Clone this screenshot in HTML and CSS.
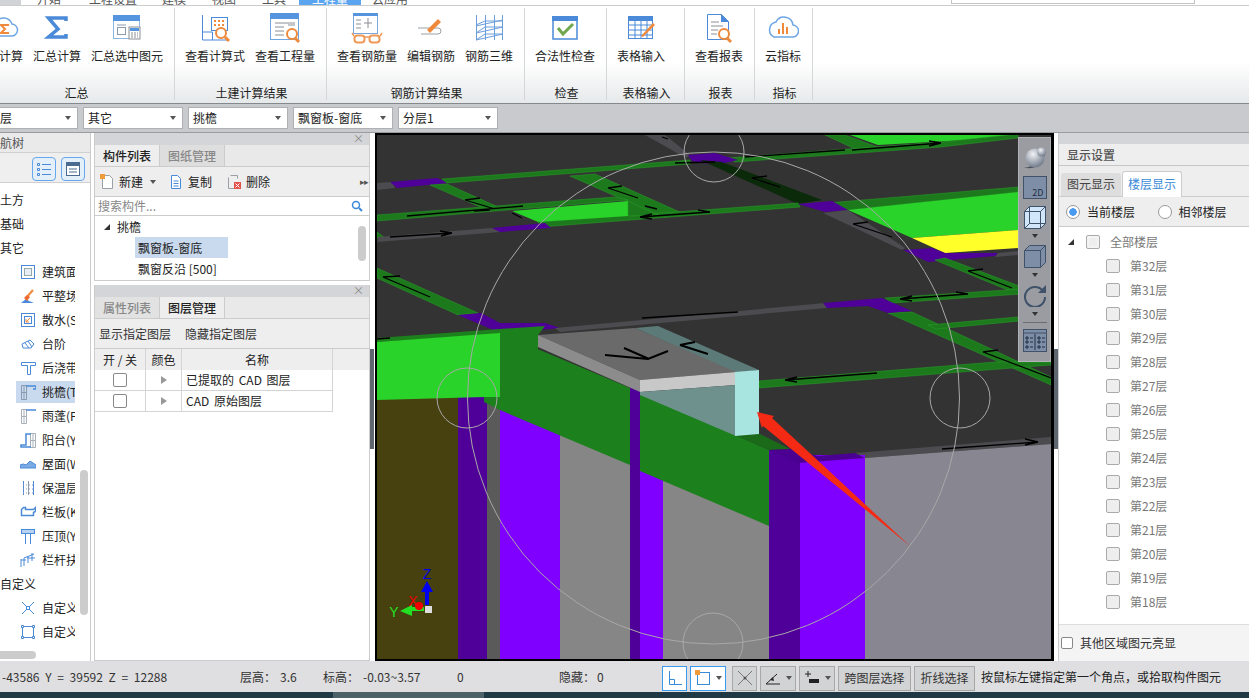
FILE: index.html
```html
<!DOCTYPE html>
<html lang="zh-CN">
<head>
<meta charset="utf-8">
<title>工程量</title>
<link rel="stylesheet" href="styles.css">
</head>
<body>
<div class="app">
  <div class="tabs">
    <span class="tabs-corner"></span>
    <span class="tab t1">开始</span><span class="tab t2">工程设置</span><span class="tab t3">建模</span><span class="tab t3">视图</span><span class="tab t3">工具</span><span class="tab active">工程量</span><span class="tab t4">云应用</span>
    <span class="tabs-search"></span>
  </div>

  <div class="ribbon">
    <section class="rg rg1">
      <div class="rb-row">
        <div class="rb"><svg class="ri" viewBox="0 0 32 32"><path d="M8 24h14a6 6 0 0 0 1-12 9 9 0 0 0-16-2 7 7 0 0 0 1 14z" fill="#fff" stroke="#6ea6e4" stroke-width="1.5"/><path d="M20 13h-8l4 4-4 4h8" fill="none" stroke="#ef8a3c" stroke-width="2"/></svg><span>云计算</span></div>
        <div class="rb"><svg class="ri" viewBox="0 0 32 32"><path d="M25 9V6H7.500L17 17 7.500 25H25v-3" fill="none" stroke="#4a8ad8" stroke-width="3.500"/></svg><span>汇总计算</span></div>
        <div class="rb"><svg class="ri" viewBox="0 0 32 32"><rect x="2.500" y="3.500" width="26" height="23" fill="#fff" stroke="#8fb5e4"/><rect x="2" y="3" width="27" height="6" fill="#5595e0"/><rect x="6.500" y="15.500" width="8" height="7" fill="none" stroke="#8a9bb0"/><path d="M6 13h9" stroke="#8a9bb0"/><rect x="18" y="15" width="11" height="12" fill="#fff" stroke="#8a8f96"/><rect x="19" y="16" width="9" height="3" fill="#5595e0"/><path d="M20 21h7M20 23h7M20 25h7" stroke="#8a8f96" stroke-dasharray="2 1"/></svg><span>汇总选中图元</span></div>
      </div>
      <div class="rg-label">汇总</div>
    </section>
    <section class="rg rg2">
      <div class="rb-row">
        <div class="rb"><svg class="ri" viewBox="0 0 32 32"><path d="M3.500 3v25H30M3.500 20h10v8" fill="none" stroke="#4a8ad8"/><rect x="12.500" y="5.500" width="16" height="13" fill="#fff" stroke="#4a8ad8"/><path d="M15 9h11M15 13h11" stroke="#ef8a3c" stroke-width="2" stroke-dasharray="2 2"/><circle cx="22" cy="21" r="5" fill="#fff" stroke="#ef8a3c" stroke-width="2"/><path d="M26 25l4 4" stroke="#ef8a3c" stroke-width="3"/></svg><span>查看计算式</span></div>
        <div class="rb"><svg class="ri" viewBox="0 0 32 32"><rect x="1.500" y="1.500" width="28" height="26" fill="#fff" stroke="#6ea6e4"/><rect x="1" y="1" width="29" height="6" fill="#5595e0"/><path d="M6 11h20M6 15h9M6 19h9M6 23h9M19 13h7" stroke="#8a8f96"/><circle cx="23" cy="22" r="5" fill="#fff" stroke="#ef8a3c" stroke-width="2"/><path d="M26 26l4 4" stroke="#ef8a3c" stroke-width="3"/></svg><span>查看工程量</span></div>
      </div>
      <div class="rg-label">土建计算结果</div>
    </section>
    <section class="rg rg3">
      <div class="rb-row">
        <div class="rb"><svg class="ri" viewBox="0 0 32 32"><rect x="2.500" y="1.500" width="24" height="20" fill="#fff" stroke="#7aa8de"/><rect x="2" y="1" width="25" height="3" fill="#5595e0"/><path d="M5 8h5M5 12h5M5 16h5M17 6v10M13 11h8" stroke="#8a8f96"/><rect x="3.500" y="23.500" width="10" height="7" rx="3" fill="#fff" stroke="#f09a5a" stroke-width="2"/><rect x="18.500" y="23.500" width="10" height="7" rx="3" fill="#fff" stroke="#f09a5a" stroke-width="2"/><path d="M13 25h6M3 24l-2-3M29 24l2-3" stroke="#f09a5a" stroke-width="1.500"/></svg><span>查看钢筋量</span></div>
        <div class="rb"><svg class="ri" viewBox="0 0 32 32"><path d="M3 16h20a3 3 0 0 1 0 6H6" fill="none" stroke="#9aa0a6"/><path d="M12 18l11-11 3 3-11 11z" fill="#ef8a3c"/></svg><span>编辑钢筋</span></div>
        <div class="rb"><svg class="ri" viewBox="0 0 32 32"><path d="M3.500 3v25M12.500 3v25M21.500 3v25M29.500 3v25M3 14l27-6M3 21l27-6M3 28l27-6M3 13l9-4M12 9h18M3 21l9-6h18M3 28l9-6h18" fill="none" stroke="#6a9ddc"/></svg><span>钢筋三维</span></div>
      </div>
      <div class="rg-label">钢筋计算结果</div>
    </section>
    <section class="rg rg4">
      <div class="rb-row">
        <div class="rb"><svg class="ri" viewBox="0 0 32 32"><rect x="4" y="5" width="24" height="22" fill="#fff" stroke="#4a8ad8" stroke-width="1.500"/><rect x="3" y="4" width="26" height="5" fill="#4a8ad8"/><path d="M9 16l5 6 10-10" fill="none" stroke="#6fa84f" stroke-width="3"/></svg><span>合法性检查</span></div>
      </div>
      <div class="rg-label">检查</div>
    </section>
    <section class="rg rg5">
      <div class="rb-row">
        <div class="rb"><svg class="ri" viewBox="0 0 32 32"><rect x="3.500" y="4.500" width="24" height="22" fill="#fff" stroke="#4a8ad8"/><rect x="3" y="4" width="25" height="5" fill="#4a8ad8"/><path d="M4 13h23M4 18h23M4 23h23M10 9v17M16 9v17M22 9v17" stroke="#4a8ad8"/><path d="M16 24l12-13 2 2-12 12z" fill="#ef8a3c"/></svg><span>表格输入</span></div>
      </div>
      <div class="rg-label">表格输入</div>
    </section>
    <section class="rg rg6">
      <div class="rb-row">
        <div class="rb"><svg class="ri" viewBox="0 0 32 32"><path d="M4.500 2.500h14l7 7v18h-21z" fill="#fff" stroke="#4a8ad8"/><path d="M18 2l8 8h-8z" fill="#4a8ad8"/><path d="M8 10h8M8 14h12M8 18h7M8 22h6" stroke="#8a8f96"/><circle cx="21" cy="22" r="5" fill="#fff" stroke="#ef8a3c" stroke-width="2"/><path d="M24 26l4 4" stroke="#ef8a3c" stroke-width="3"/></svg><span>查看报表</span></div>
      </div>
      <div class="rg-label">报表</div>
    </section>
    <section class="rg rg7">
      <div class="rb-row">
        <div class="rb"><svg class="ri" viewBox="0 0 32 32"><path d="M7 25h18a6 6 0 0 0 1-12 9 9 0 0 0-17-3 8 8 0 0 0-2 15z" fill="#fff" stroke="#6ea6e4" stroke-width="1.500"/><path d="M12 22v-5M16 22V11M20 22v-7" stroke="#ef8a3c" stroke-width="2"/></svg><span>云指标</span></div>
      </div>
      <div class="rg-label">指标</div>
    </section>
  </div>

  <div class="combos">
    <div class="combo first"><span>首层</span><i class="caret"></i></div>
    <div class="combo"><span>其它</span><i class="caret"></i></div>
    <div class="combo"><span>挑檐</span><i class="caret"></i></div>
    <div class="combo"><span>飘窗板-窗底</span><i class="caret"></i></div>
    <div class="combo"><span>分层1</span><i class="caret"></i></div>
  </div>

  <div class="main">
    <aside class="nav">
      <div class="nav-head"><span>导航树</span></div>
      <div class="nav-tools">
        <span class="nav-btn"><svg viewBox="0 0 16 16" class="nb"><path d="M1.500 2.500h2v2h-2zM1.500 7.500h2v2h-2zM1.500 12.500h2v2h-2zM6 3.500h9M6 8.500h9M6 13.500h9" fill="none" stroke="#4a8ad8"/></svg></span>
        <span class="nav-btn"><svg viewBox="0 0 16 16" class="nb"><rect x="1.500" y="1.500" width="13" height="13" fill="#fff" stroke="#4a6a90"/><rect x="1" y="1" width="14" height="4" fill="#4a6a90"/><path d="M4 8h8M4 11h8" stroke="#4a6a90"/></svg></span>
      </div>
      <div class="nav-body">
        <div class="nav-list">
          <div class="n1">土方</div>
          <div class="n1">基础</div>
          <div class="n1">其它</div>
          <div class="n2"><svg class="ti" viewBox="0 0 16 16"><rect x="1.500" y="1.500" width="13" height="13" fill="none" stroke="#4a8ad8"/><rect x="4.500" y="4.500" width="7" height="7" fill="#e8eef5" stroke="#9aa"/></svg><span>建筑面积(M)</span></div>
          <div class="n2"><svg class="ti" viewBox="0 0 16 16"><path d="M1 15l5-4 3 2 5 2z" fill="#4a8ad8"/><path d="M6 10l7-8" stroke="#ef8a3c" stroke-width="2"/><path d="M4 10l3 3 3-4-3-2z" fill="#ef6a2c"/></svg><span>平整场地(V)</span></div>
          <div class="n2"><svg class="ti" viewBox="0 0 16 16"><rect x="1.500" y="1.500" width="13" height="13" fill="none" stroke="#4a8ad8"/><rect x="4.500" y="4.500" width="7" height="7" fill="#fff" stroke="#4a8ad8"/><path d="M6 10l4-4M6 10h3M6 10V7" stroke="#ef8a3c"/></svg><span>散水(S)</span></div>
          <div class="n2"><svg class="ti" viewBox="0 0 16 16"><path d="M2 8l8-4 4 4-3 4H3z" fill="#fff" stroke="#4a8ad8"/><path d="M5 7l4 5M8 5l4 6" stroke="#4a8ad8"/></svg><span>台阶</span></div>
          <div class="n2"><svg class="ti" viewBox="0 0 16 16"><path d="M1.500 2.500h14v3h-5v9h-3v-9h-6z" fill="none" stroke="#4a8ad8"/></svg><span>后浇带(JD)</span></div>
          <div class="n2 sel"><svg class="ti" viewBox="0 0 16 16"><path d="M1.500 1.500h5v14h-5zM1.500 8.500h5M4 1.500v14" fill="none" stroke="#8a9bb0"/><path d="M6 2h10v3h-3" fill="none" stroke="#4a8ad8" stroke-width="1.500"/></svg><span>挑檐(T)</span></div>
          <div class="n2"><svg class="ti" viewBox="0 0 16 16"><path d="M1.500 1.500h5v14h-5zM1.500 8.500h5M4 1.500v14" fill="none" stroke="#a8b0b8"/><path d="M6 2h10" fill="none" stroke="#4a8ad8" stroke-width="1.500"/></svg><span>雨蓬(P)</span></div>
          <div class="n2"><svg class="ti" viewBox="0 0 16 16"><path d="M10.500 1.500h5v14h-5zM10.500 8.500h5M13 1.500v14" fill="none" stroke="#a8b0b8"/><path d="M11 2H6v11H1v2h10" fill="none" stroke="#4a8ad8" stroke-width="1.500"/></svg><span>阳台(Y)</span></div>
          <div class="n2"><svg class="ti" viewBox="0 0 16 16"><path d="M0 9l3-1 3 1 4-4 6 4v3H0z" fill="#7aaae4" stroke="#4a8ad8"/></svg><span>屋面(W)</span></div>
          <div class="n2"><svg class="ti" viewBox="0 0 16 16"><path d="M3.500 1v14M13.500 1v14" stroke="#4a8ad8"/><path d="M8.500 1v14" stroke="#8a9bb0"/><path d="M3 5h11M3 9h11M3 13h11" stroke="#8a9bb0" stroke-dasharray="1 2"/></svg><span>保温层(H)</span></div>
          <div class="n2"><svg class="ti" viewBox="0 0 16 16"><path d="M1.500 5.500l2-2h2v2h8l2-2v4l-2 1v3h-12z" fill="#fff" stroke="#4a8ad8" stroke-width="1.500"/></svg><span>栏板(K)</span></div>
          <div class="n2"><svg class="ti" viewBox="0 0 16 16"><rect x="1.500" y="1.500" width="13" height="4" fill="#b8d3f2" stroke="#4a8ad8"/><path d="M5.500 5v11M10.500 5v11" stroke="#4a8ad8"/></svg><span>压顶(YD)</span></div>
          <div class="n2"><svg class="ti" viewBox="0 0 16 16"><path d="M1 15V7M4 14V6l10-4M8 11V4M12 9V1M1 8h5M7 6h8" fill="none" stroke="#4a8ad8"/></svg><span>栏杆扶手(G)</span></div>
          <div class="n1">自定义</div>
          <div class="n2"><svg class="ti" viewBox="0 0 16 16"><path d="M2 2l4 4M14 2l-4 4M2 14l4-4M14 14l-4-4" stroke="#4a8ad8"/><rect x="6.500" y="6.500" width="3" height="3" fill="none" stroke="#4a8ad8"/></svg><span>自定义点</span></div>
          <div class="n2"><svg class="ti" viewBox="0 0 16 16"><rect x="2.500" y="2.500" width="11" height="11" fill="none" stroke="#4a8ad8"/><path d="M1.500 1.500h2v2h-2zM12.500 1.500h2v2h-2zM1.500 12.500h2v2h-2zM12.500 12.500h2v2h-2z" fill="#fff" stroke="#4a8ad8"/></svg><span>自定义线</span></div>
        </div>
        <div class="nav-vbar"><i></i></div>
      </div>
      <div class="nav-hbar"><i></i></div>
    </aside>

    <div class="mid">
      <section class="pane pane-top">
        <div class="pane-title"><span class="x">×</span></div>
        <div class="ptabs">
          <span class="ptab on">构件列表</span><span class="ptab">图纸管理</span>
        </div>
        <div class="ptools">
          <span class="pt pt-new"><svg class="pi" viewBox="0 0 14 16"><path d="M2.500 1.500h7l3 3v10h-10z" fill="#fff" stroke="#9aa0a6"/><rect x="0" y="0" width="5" height="5" fill="#f09a3c"/></svg>新建</span>
          <i class="caret dark"></i>
          <span class="pt pt-copy"><svg class="pi" viewBox="0 0 14 16"><path d="M2.500 1.500h6l3 3v10h-9z" fill="#fff" stroke="#4a8ad8"/><path d="M4.500 7h5M4.500 9.500h5M4.500 12h5" stroke="#4a8ad8"/></svg>复制</span>
          <span class="pt pt-del"><svg class="pi" viewBox="0 0 14 16"><path d="M3.500 1.500h7v3M1.500 3.500v11h6" fill="none" stroke="#9aa0a6"/><rect x="7" y="8" width="7" height="7" fill="#e2504a"/><path d="M8.500 9.500l4 4M12.500 9.500l-4 4" stroke="#fff"/></svg>删除</span>
          <span class="more">▸▸</span>
        </div>
        <div class="search"><span>搜索构件...</span><svg class="sg" viewBox="0 0 12 12"><circle cx="5" cy="5" r="3.500" fill="none" stroke="#3a8ad8" stroke-width="1.500"/><path d="M8 8l3 3" stroke="#3a8ad8" stroke-width="2"/></svg></div>
        <div class="plist">
          <div class="plist-in">
            <div class="pl-parent"><i class="tri"></i>挑檐</div>
            <div class="pl-child sel">飘窗板-窗底</div>
            <div class="pl-child">飘窗反沿 [500]</div>
          </div>
          <div class="pl-bar"></div>
        </div>
      </section>
      <section class="pane pane-bot">
        <div class="pane-title"><span class="x">×</span></div>
        <div class="ptabs">
          <span class="ptab off">属性列表</span><span class="ptab cur">图层管理</span>
        </div>
        <div class="ptools2"><span>显示指定图层</span><span>隐藏指定图层</span></div>
        <div class="tbl">
          <div class="tr th"><span class="c1">开 / 关</span><span class="c2">颜色</span><span class="c3">名称</span></div>
          <div class="tr"><span class="c1"><i class="cb"></i></span><span class="c2"><i class="play"></i></span><span class="c3 left">已提取的 CAD 图层</span></div>
          <div class="tr"><span class="c1"><i class="cb"></i></span><span class="c2"><i class="play"></i></span><span class="c3 left">CAD 原始图层</span></div>
        </div>
      </section>
    </div>

    <div class="split"><i></i></div>

    <div class="view">
      <svg class="scene" viewBox="377 135 674 524">
        <rect x="377" y="135" width="674" height="524" fill="#333"/>
        <!-- upper beams -->
        <polygon class="dg" points="825,135 845,135 880,148 855,149"/>
        <polygon class="lg" points="850,135 878,145 1018,137 1018,135"/>
        <polygon class="gy" points="377,183 392,182 395,188 377,190"/>
        <polygon class="pu" points="390,182 437,178 448,183 397,188"/>
        <polygon class="dg" points="442,179 690,160 690,164 447,183"/>
        <polygon class="gy" points="645,135 665,135 690,155 686,158"/>
        <polygon class="dg" points="728,158 941,142 1018,134 1018,138 941,147 735,162"/>
        <polygon class="pu" points="688,155 715,153 738,160 715,165 692,161"/>
        <polygon fill="#0a2a0a" points="700,160 722,162 822,200 798,204"/>
        <polygon class="dg" points="430,185 447,184 498,207 485,209"/>
        <polygon class="dg" points="570,176 595,174 682,213 658,215"/>
        <polygon class="dg" points="377,215 615,197 628,200 377,221"/>
        <polygon class="dg" points="538,222 798,203 800,207 541,227"/>
        <polygon class="lg" points="512,211 628,201 628,216 538,222"/>
        <polygon class="dg" points="628,201 658,215 628,216"/>
        <polygon class="dg" points="377,232 385,238 377,238"/>
        <polygon class="gy" points="378,237 492,228 500,232 377,242"/>
        <polygon class="pu" points="492,228 545,223 551,228 500,232"/>
        <polygon class="dg" points="827,203 1018,187 1018,192 848,210"/>
        <polygon class="lg" points="848,210 1018,192 1018,230 912,238"/>
        <polygon fill="#ffff2a" points="912,238 1018,230 1018,248 945,253"/>
        <polygon class="pu" points="798,204 832,201 848,210 825,212"/>
        <polygon class="gy" points="823,213 848,210 905,248 902,250"/>
        <polygon class="gy" points="998,253 1051,248 1051,252 995,257"/>
        <polygon class="pu" points="903,250 932,248 945,253 998,253 995,256 928,262"/>
        <polygon class="dg" points="935,260 945,258 1051,298 1051,308"/>
        <polygon class="dg" points="885,298 1051,287 1051,292 892,303"/>
        <polygon class="dg" points="888,313 912,312 1051,377 1051,385"/>
        <polygon class="dg" points="928,325 1051,314 1051,318 936,329"/>
        <polygon class="dg" points="377,268 478,313 458,315 377,278"/>
        <polygon class="pu" points="458,315 481,313 500,323 545,323 560,328 507,333 498,332"/>
        <polygon class="gy" points="555,328 825,303 827,308 560,332"/>
        <polygon class="pu" points="823,303 882,298 912,311 888,313 868,306 827,308"/>
        <polygon class="dg" points="759,381 995,362 1051,362 1051,365 759,388"/>
        <!-- back strip -->
        <polygon class="gy" points="855,453 1051,437 1051,444 865,458"/>
        <!-- walls -->
        <rect x="377" y="398" width="81" height="261" fill="#474110"/>
        <rect x="458" y="397" width="29" height="262" fill="#4f0099"/>
        <rect x="487" y="397" width="13" height="262" fill="#5a5a5a"/>
        <polygon fill="#8000ff" points="500,405 560,430 560,659 500,659"/>
        <polygon fill="#868686" points="560,430 630,460 630,659 560,659"/>
        <polygon fill="#8000ff" points="640,465 663,475 663,659 640,659"/>
        <polygon fill="#868686" points="663,475 770,520 770,659 663,659"/>
        <rect x="630" y="388" width="10" height="271" fill="#4f0099"/>
        <rect x="800" y="455" width="65" height="204" fill="#8000ff"/>
        <polygon fill="#888690" points="865,458 1051,444 1051,659 865,659"/>
        <rect x="769" y="450" width="31" height="209" fill="#4f0099"/>
        <!-- green block and beam -->
        <polygon fill="#1c801c" points="377,338 500,329 545,326 538,335 538,350 500,334 377,342"/>
        <polygon class="lg" points="377,342 500,333 500,397 485,397 377,400"/>
        <polygon fill="#1c801c" points="500,333 630,388 630,465 500,410 484,402 484,397 500,397"/>
        <polygon fill="#1c801c" points="640,393 769,450 769,526 640,471"/>
        <polygon fill="#1a6a1a" points="735,435 760,434 790,449 769,450"/>
        <polygon fill="#4a0090" points="769,450 798,463 865,458 855,453 818,456 790,449"/>
        <!-- bay window box -->
        <polygon fill="#5c7b78" points="635,328 658,326 759,370 736,373"/>
        <polygon fill="#6a6a6a" points="538,335 635,328 736,372 640,380"/>
        <polygon fill="#8c8c8c" points="538,335 640,380 640,392 538,347"/>
        <polygon fill="#c8c8c8" points="640,380 736,372 736,385 640,392"/>
        <polygon fill="#6e918d" points="640,392 736,385 736,436 640,395"/>
        <polygon fill="#a8e4e0" points="735,372 759,370 759,434 735,436"/>
        <!-- dimension arrows -->
        <path class="ar" d="M465 200L495 209M465 200l15-2M407 216L523 206M490 210l-16 1M390 237L452 233M452 233l-12-2M452 233l-11 3M383 277L430 297M383 277l17-1M608 188L638 198M608 188l14-2M645 206L657 209M640 217L710 212M640 217l12-3M640 217l12 2M710 212l-12-2M642 318L738 312M377 339L390 338M512 213L522 218M752 178L780 187M752 178l15-2M853 224L892 237M853 224l15-2M852 150L941 143M941 143l-12-2M941 143l-12 3M745 157L845 150M968 271L1012 288M968 271l15-2M900 299L968 294M900 299l12-3M900 299l12 2M968 294l-12-2M983 352L1051 378M983 352l15-2M785 380L877 373M785 380l12-3M785 380l12 2M942 449L1038 442M1038 442l-13-3M1038 442l-13 3M675 163L715 162M662 137L668 139"/>
        <path class="ar2" d="M605 355L648 359L668 351M624 348L649 359M680 345L708 354M680 345L695 342"/>
        <!-- snap circles -->
        <g class="ring">
          <circle cx="713.500" cy="398" r="246"/>
          <circle cx="714" cy="152" r="30"/>
          <circle cx="467" cy="398" r="30"/>
          <circle cx="960" cy="398" r="30"/>
          <circle cx="713" cy="643" r="30"/>
        </g>
        <!-- red annotation arrow -->
        <polygon fill="#f42a14" points="757,412 774,416 772,418 910,546 763,426 762,428"/>
        <!-- axes -->
        <path d="M427 605V588" stroke="#0000f0" stroke-width="4"/>
        <polygon fill="#0000f0" points="427,581 433,592 421,592"/>
        <text class="ax az" x="427" y="579">Z</text>
        <path d="M424 609H408" stroke="#22e022" stroke-width="4"/>
        <polygon fill="#22e022" points="400,611 412,605 412,616"/>
        <text class="ax ay" x="394" y="617">Y</text>
        <circle cx="419" cy="606" r="4" fill="#f00000"/>
        <text class="ax axx" x="413" y="606">X</text>
        <rect x="425" y="606" width="7" height="7" fill="#ddd"/>
      </svg>
      <div class="vtools">
        <svg class="vt-sphere" viewBox="0 0 24 24"><defs><radialGradient id="sph" cx="40%" cy="30%" r="75%"><stop offset="0" stop-color="#f0f2f6"/><stop offset="1" stop-color="#6a7484"/></radialGradient></defs><path d="M0 21c5 2 15-3 22-13l-3 9c-4 4-12 7-19 4z" fill="#4a5260"/><circle cx="12" cy="12" r="9.500" fill="url(#sph)"/><circle cx="18.500" cy="6" r="4.500" fill="url(#sph)"/></svg>
        <div class="vt-2d"><span>2D</span></div>
        <svg class="vt-cube" viewBox="0 0 24 24"><path d="M1.500 6.500l5-5h16v17l-5 5h-16z" fill="#d2e6fb" stroke="#3f5269"/><path d="M1.500 6.500h16v17M17.500 6.500l5-5M6.500 1.500v17h16M6.500 18.500l-5 5" fill="none" stroke="#3f5269"/></svg>
        <i class="caret small"></i>
        <svg class="vt-cube" viewBox="0 0 24 24"><path d="M1.500 6.500l5-5h16v17l-5 5h-16z" fill="#7d8ea6" stroke="#3f5269"/><path d="M1.500 6.500h16v17M17.500 6.500l5-5" fill="none" stroke="#3f5269"/></svg>
        <i class="caret small"></i>
        <svg class="vt-cube" viewBox="0 0 24 24"><path d="M20 8a10 10 0 1 0 2 6" fill="none" stroke="#3f5269" stroke-width="2"/><path d="M23 2v8h-8z" fill="#3f5269"/></svg>
        <i class="caret small"></i>
        <div class="vt-sep"></div>
        <svg class="vt-cube" viewBox="0 0 24 24"><rect x="0.500" y="1.500" width="23" height="22" fill="#7d8ea6" stroke="#3f5269"/><path d="M1 5h22" stroke="#3f5269"/><path d="M12 6v16M3 9h2v2H3zM3 13h2v2H3zM3 18h2v2H3zM15 9h2v2h-2zM15 13h2v2h-2zM15 18h2v2h-2zM7 10h3M7 14h3M7 19h3M19 10h3M19 14h3M19 19h3" fill="none" stroke="#1f2f44"/></svg>
      </div>
    </div>

    <div class="split right"><i></i></div>

    <aside class="side">
      <div class="side-top"></div>
      <div class="side-head">显示设置</div>
      <div class="stabs"><span class="stab">图元显示</span><span class="stab on">楼层显示</span></div>
      <div class="radios">
        <span class="radio on"><i></i>当前楼层</span>
        <span class="radio"><i></i>相邻楼层</span>
      </div>
      <div class="floors">
        <div class="fl root"><i class="tri"></i><i class="fcb root-cb"></i>全部楼层</div>
        <div class="fl"><i class="fcb"></i>第32层</div>
        <div class="fl"><i class="fcb"></i>第31层</div>
        <div class="fl"><i class="fcb"></i>第30层</div>
        <div class="fl"><i class="fcb"></i>第29层</div>
        <div class="fl"><i class="fcb"></i>第28层</div>
        <div class="fl"><i class="fcb"></i>第27层</div>
        <div class="fl"><i class="fcb"></i>第26层</div>
        <div class="fl"><i class="fcb"></i>第25层</div>
        <div class="fl"><i class="fcb"></i>第24层</div>
        <div class="fl"><i class="fcb"></i>第23层</div>
        <div class="fl"><i class="fcb"></i>第22层</div>
        <div class="fl"><i class="fcb"></i>第21层</div>
        <div class="fl"><i class="fcb"></i>第20层</div>
        <div class="fl"><i class="fcb"></i>第19层</div>
        <div class="fl"><i class="fcb"></i>第18层</div>
      </div>
      <div class="side-foot"><i class="cb small"></i>其他区域图元亮显</div>
    </aside>
  </div>

  <div class="status">
    <span class="st s-coord">-43586 Y = 39592 Z = 12288</span>
    <span class="st s-lh">层高：</span><span class="st s-lhv">3.6</span>
    <span class="st s-bg">标高：</span><span class="st s-bgv">-0.03~3.57</span>
    <span class="st s-zero">0</span>
    <span class="st s-hide">隐藏：</span><span class="st s-hidev">0</span>
    <span class="sb on b1"><svg viewBox="0 0 16 16" class="si"><path d="M2.500 1v13.500H15M2.500 9.500h5v5" fill="none" stroke="#3a8ad8"/></svg></span>
    <span class="sb on b2"><svg viewBox="0 0 16 16" class="si"><rect x="2.500" y="2.500" width="12" height="12" fill="none" stroke="#3a8ad8"/><rect x="0" y="0" width="5" height="5" fill="#f09a3c"/></svg><i class="caret dark"></i></span>
    <span class="sb b3"><svg viewBox="0 0 16 16" class="si"><path d="M1 1l14 14M15 1L1 15" stroke="#777"/><circle cx="8" cy="8" r="1.500" fill="#555"/></svg></span>
    <span class="sb b4"><svg viewBox="0 0 16 16" class="si"><path d="M1 14h14M1 14L12 4" stroke="#222"/><path d="M5 10l3-3 1 4z" fill="#222"/></svg><i class="caret dark"></i></span>
    <span class="sb b5"><svg viewBox="0 0 16 16" class="si"><path d="M1 4h6M4 1v6" stroke="#222"/><rect x="5" y="9" width="10" height="4" fill="#222"/></svg><i class="caret dark"></i></span>
    <span class="sb txt b6">跨图层选择</span>
    <span class="sb txt b7">折线选择</span>
    <span class="st s-hint">按鼠标左键指定第一个角点，或拾取构件图元</span>
  </div>
  <div class="taskbar"><i></i></div>
</div>
</body>
</html>
```

FILE: styles.css
```css
* { box-sizing: border-box; }
html, body { margin: 0; padding: 0; }
body { width: 1249px; height: 698px; overflow: hidden; background: #fff; }
.app {
  width: 1249px; height: 698px; overflow: hidden; display: flex; flex-direction: column;
  font: 12px/16px "Noto Sans CJK SC", "Liberation Sans", sans-serif; color: #222;
}

/* top tabs, clipped by the window edge */
.tabs { height: 6px; flex: none; display: flex; background: #fff; border-bottom: 1px solid #ccc; overflow: hidden; line-height: 12px; }
.tabs-corner { width: 21px; background: #d2d3d6; flex: none; }
.tab { height: 5px; flex: none; display: flex; align-items: flex-end; justify-content: center; color: #555; overflow: hidden; }
.tab.t1 { width: 56px; } .tab.t2 { width: 72px; } .tab.t3 { width: 50px; } .tab.t4 { width: 58px; }
.tab.active { width: 62px; background: #5ba5f0; color: #fff; }
.tabs-search { width: 244px; height: 4px; margin-left: 532px; border: 1px solid #c4c4c4; border-top: 0; flex: none; }

/* ribbon */
.ribbon {
  height: 98px; flex: none; display: flex; border-bottom: 1px solid #85888c;
  background: linear-gradient(#fff 0, #fff 58%, #e6e9ea 100%);
}
.rg { flex: none; padding: 2px 0 0 5px; display: flex; flex-direction: column; position: relative; border-right: 1px solid transparent; }
.rg::after { content: ""; position: absolute; right: -1px; top: 2px; bottom: 3px; width: 1px; background: #d4d6d8; }
.rg1 { width: 198px; margin-left: -23px; }
.rg2 { width: 152px; } .rg3 { width: 198px; } .rg4 { width: 82px; }
.rg5 { width: 78px; } .rg6 { width: 70px; } .rg7 { width: 58px; }
.rb-row { display: flex; height: 73px; }
.rb { display: flex; flex-direction: column; align-items: center; padding: 4px 5px 0; white-space: nowrap; }
.ri { width: 32px; height: 32px; display: block; margin-bottom: 4px; }
.rg-label { text-align: center; height: 16px; margin-left: -3px; margin-top: 4px; }

/* combo strip */
.combos { height: 29px; flex: none; background: #c8cacd; display: flex; gap: 5px; padding-top: 3px; border-bottom: 1px solid #9a9c9f; }
.combo { width: 100px; height: 22px; background: #fff; border: 1px solid #aeb0b3; display: flex; align-items: center; justify-content: space-between; padding: 0 6px 0 4px; }
.combo.first { width: 100px; margin-left: -22px; padding-left: 9px; }
.caret { width: 0; height: 0; border-left: 3px solid transparent; border-right: 3px solid transparent; border-top: 4px solid #555; display: inline-block; }

/* main area */
.main { height: 528px; flex: none; display: flex; background: #fff; }

/* navigation tree */
.nav { width: 91px; flex: none; border-right: 1px solid #ccc; display: flex; flex-direction: column; }
.nav-head { height: 20px; background: #eaeaea; border-bottom: 1px solid #d0d0d0; padding-top: 2px; overflow: hidden; }
.nav-head span { margin-left: -12px; display: block; color: #555; }
.nav-tools { height: 30px; background: #efefef; border-bottom: 1px solid #d0d0d0; display: flex; gap: 5px; padding: 4px 0 0 32px; }
.nav-btn { width: 24px; height: 24px; border: 1px solid #66a8ee; border-radius: 4px; background: #e4effa; display: flex; align-items: center; justify-content: center; }
.nb { width: 16px; height: 16px; }
.nav-body { flex: 1; display: flex; min-height: 0; overflow: hidden; }
.nav-list { width: 75px; padding-top: 6px; flex: none; overflow: hidden; display: flex; flex-direction: column; gap: 2px; }
.n1, .n2 { height: 22px; flex: none; display: flex; align-items: center; white-space: nowrap; overflow: hidden; }
.n2 { margin-left: 16px; padding-left: 4px; }
.n2.sel { background: #c9daef; }
.n2 span { flex: none; }
.ti { width: 16px; height: 16px; flex: none; margin-right: 6px; }
.nav-vbar { width: 8px; margin-left: 5px; }
.nav-vbar i { display: block; width: 8px; height: 145px; margin-top: 287px; background: #ccc; border-radius: 4px; }
.nav-hbar { height: 10px; padding-bottom: 2px; flex: none; }
.nav-hbar i { display: block; width: 36px; height: 8px; background: #ccc; border-radius: 0 4px 4px 0; }

/* middle panes */
.mid { width: 276px; margin-left: 3px; flex: none; display: flex; flex-direction: column; gap: 4px; }
.pane { border: 1px solid #ccc; border-top: 0; background: #fff; display: flex; flex-direction: column; }
.pane-top { height: 148px; flex: none; }
.pane-bot { flex: 1; }
.pane-title { height: 12px; background: #d4d5d8; display: flex; justify-content: flex-end; padding-right: 5px; line-height: 11px; color: #888; flex: none; }
.x { font-size: 11px; }
.ptabs { height: 22px; background: #e9e9ea; border-bottom: 1px solid #ccc; display: flex; flex: none; }
.ptab { width: 65px; text-align: center; line-height: 21px; background: #dedede; color: #888; border-right: 1px solid #ccc; font-weight: 500; }
.ptab.on, .ptab.cur { background: #eee; color: #222; }
.ptab.off { color: #888; background: #e2e2e2; }
.ptools { height: 30px; background: #eee; border-bottom: 1px solid #ccc; display: flex; align-items: center; padding-left: 5px; flex: none; }
.pt { display: flex; align-items: center; }
.pi { width: 14px; height: 16px; margin-right: 5px; }
.pt-new + .caret { margin-left: 7px; }
.pt-copy { margin-left: 13px; }
.pt-del { margin-left: 15px; }
.more { margin-left: auto; margin-right: 1px; font-size: 9px; color: #555; letter-spacing: -1px; }
.search { height: 19px; border-bottom: 1px solid #ccc; display: flex; align-items: center; justify-content: space-between; padding: 0 6px 0 3px; color: #888; flex: none; }
.sg { width: 12px; height: 12px; }
.plist { flex: 1; display: flex; min-height: 0; overflow: hidden; }
.plist-in { flex: 1; }
.pl-parent { height: 21px; display: flex; align-items: center; padding-left: 9px; }
.tri { width: 0; height: 0; border-left: 6px solid transparent; border-bottom: 6px solid #333; margin-right: 7px; display: inline-block; }
.pl-child { height: 21px; width: 93px; margin-left: 40px; padding-left: 3px; line-height: 21px; white-space: nowrap; }
.pl-child.sel { background: #c9daef; }
.pl-bar { width: 8px; height: 35px; margin: 10px 3px 0 0; background: #ccc; border-radius: 4px; }
.ptools2 { height: 30px; background: #eee; border-bottom: 1px solid #ccc; display: flex; align-items: center; gap: 14px; padding-left: 4px; color: #333; flex: none; }
.tbl { width: 238px; }
.tr { height: 21px; display: flex; border-bottom: 1px solid #d4d4d4; line-height: 20px; }
.th { background: #eee; width: 274px; border-bottom: 0; }
.c1, .c2, .c3 { display: flex; align-items: center; justify-content: center; border-right: 1px solid #d4d4d4; }
.c1 { width: 51px; } .c2 { width: 36px; } .c3 { width: 151px; }
.c3.left { justify-content: flex-start; padding-left: 4px; word-spacing: 2px; }
.th .c3 { background: #eee; }
.cb { width: 14px; height: 14px; border: 1px solid #888; border-radius: 2px; background: #fff; display: inline-block; }
.cb.small { width: 12px; height: 12px; margin-right: 7px; flex: none; }
.play { width: 0; height: 0; border-left: 6px solid #999; border-top: 4px solid transparent; border-bottom: 4px solid transparent; display: inline-block; }

/* splitters */
.split { width: 5px; flex: none; display: flex; align-items: center; }
.split.right { width: 4px; }
.split i { display: block; width: 4px; height: 100px; background: #5e6670; margin-top: 3px; }

/* 3D canvas */
.view { width: 679px; flex: none; position: relative; background: #000; padding: 2px 3px 2px 2px; }
.scene { display: block; width: 674px; height: 524px; }
.dg { fill: #1c7a1c; stroke: #2aa02a; stroke-width: .5; }
.lg { fill: #29d329; }
.gy { fill: #4c4c50; }
.pu { fill: #4f0099; }
.ar { fill: none; stroke: #000; stroke-width: 1.300; }
.ar2 { fill: none; stroke: #000; stroke-width: 2; }
.ring circle { fill: none; stroke: #a8a8a8; stroke-width: 1; }
.ax { font: 14px "Liberation Sans", sans-serif; text-anchor: middle; }
.az { fill: #0000e0; } .ay { fill: #22e022; } .axx { fill: #f00000; }
.vtools {
  position: absolute; left: 643px; top: 4px; width: 33px; height: 225px; background: #9a9ca2;
  border: 1px solid #b0b2b6; display: flex; flex-direction: column; align-items: center; padding-top: 8px;
}
.vt-sphere { width: 24px; height: 24px; margin-bottom: 6px; flex: none; }
.vt-2d { width: 24px; height: 23px; flex: none; background: #7d8ea6; border: 1px solid #3f5269; display: flex; align-items: flex-end; justify-content: flex-end; font-size: 9px; line-height: 11px; color: #1f2f44; padding-right: 2px; margin-bottom: 6px; }
.vt-cube { width: 24px; height: 24px; flex: none; }
.caret.small { border-top-color: #333; margin: 5px 0 6px; flex: none; }
.vt-sep { width: 24px; height: 1px; flex: none; background: #6a6c72; margin: 0 0 5px; }

/* right settings */
.side { flex: 1; min-width: 0; display: flex; flex-direction: column; background: #fff; border-left: 1px solid #ccc; }
.side-top { height: 11px; background: #d4d5d8; flex: none; }
.side-head { height: 22px; line-height: 21px; background: #eee; border-bottom: 1px solid #c4c6ca; padding-left: 8px; color: #555; font-weight: 500; flex: none; }
.stabs { height: 31px; background: #eee; border-bottom: 1px solid #ccc; display: flex; align-items: flex-end; padding-left: 2px; flex: none; }
.stab { width: 60px; height: 23px; line-height: 22px; text-align: center; background: #ddd; color: #444; border-radius: 3px 3px 0 0; margin-right: 1px; }
.stab.on { height: 26px; line-height: 24px; background: #fff; color: #3a8ad8; border: 1px solid #ccc; border-bottom: 0; margin-bottom: -1px; }
.radios { height: 30px; background: #eee; border-bottom: 1px solid #c8cacd; display: flex; align-items: center; padding-left: 7px; flex: none; }
.radio { display: flex; align-items: center; width: 92px; color: #222; }
.radio i { width: 14px; height: 14px; border-radius: 50%; border: 1px solid #999; background: #fff; margin-right: 7px; flex: none; }
.radio.on i { background: radial-gradient(circle, #4a9af0 0 3.500px, #fff 4px); }
.floors { flex: 1; min-height: 0; overflow: hidden; padding-top: 3px; color: #777; }
.fl { height: 24px; display: flex; align-items: center; padding-left: 47px; }
.fl.root { padding-left: 9px; }
.fl.root .tri { margin-right: 12px; }
.fcb { width: 14px; height: 14px; border: 1px solid #aaa; border-radius: 2px; background: #eee; margin-right: 10px; flex: none; }
.root-cb { margin-right: 10px; box-shadow: inset 0 0 0 2px #f4f4f4; }
.side-foot { height: 37px; flex: none; display: flex; align-items: center; padding-left: 2px; border-top: 1px solid #ddd; background: #f4f4f4; color: #333; }

/* status */
.status { height: 31px; flex: none; background: #dfdfe1; display: flex; align-items: center; color: #333; }
.st { white-space: nowrap; flex: none; }
.s-coord { width: 240px; padding-left: 2px; word-spacing: 3px; }
.s-lh { width: 40px; } .s-lhv { width: 43px; }
.s-bg { width: 40px; } .s-bgv { width: 94px; }
.s-zero { width: 102px; }
.s-hide { width: 38px; } .s-hidev { width: 65px; }
.sb { height: 25px; flex: none; display: flex; align-items: center; justify-content: center; gap: 5px; border: 1px solid #a8a8a8; background: #d2d3d5; margin-right: 3px; margin-top: 3px; }
.sb.on { background: #fff; border-color: #3a9af0; }
.si { width: 16px; height: 16px; flex: none; }
.sb .caret { flex: none; }
.b1 { width: 25px; } .b2 { width: 36px; margin-right: 6px; } .b3 { width: 25px; }
.b4 { width: 36px; } .b5 { width: 36px; }
.b6 { width: 73px; } .b7 { width: 61px; margin-right: 6px; }
.s-hint { color: #222; }

.taskbar { height: 6px; flex: none; background: #1f3a44; padding-left: 333px; }
.taskbar i { display: block; width: 151px; height: 6px; background: #4c6168; }
```
